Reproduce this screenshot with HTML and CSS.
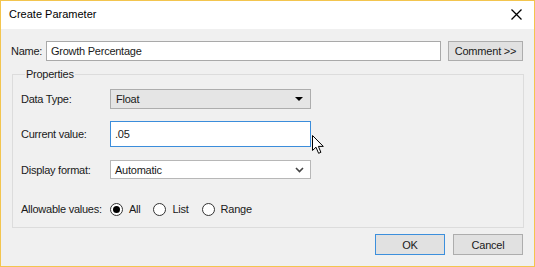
FILE: index.html
```html
<!DOCTYPE html>
<html lang="en">
<head>
    <meta charset="UTF-8">
    <title>Create Parameter</title>
    <link rel="stylesheet" href="styles.css">
</head>
<body>
  <div class="dialog">
    <div class="titlebar">
      <span class="title">Create Parameter</span>
      <svg class="close" width="11" height="11" viewBox="0 0 11 11">
        <path d="M0.5 0.5 L10.5 10.5 M10.5 0.5 L0.5 10.5" stroke="#000" stroke-width="1.3"/>
      </svg>
    </div>

    <div class="content">
      <div class="name-row">
        <label class="name-label">Name:</label>
        <div class="textbox name-box">Growth Percentage</div>
        <button class="btn comment-btn">Comment &gt;&gt;</button>
      </div>

      <fieldset class="props">
        <legend>Properties</legend>

        <div class="row row-type">
          <span class="lbl">Data Type:</span>
          <div class="combo">
            <span>Float</span>
            <span class="tri"></span>
          </div>
        </div>

        <div class="row row-value">
          <span class="lbl">Current value:</span>
          <div class="textbox value-box">.05</div>
        </div>

        <div class="row row-format">
          <span class="lbl">Display format:</span>
          <div class="dropdown">
            <span>Automatic</span>
            <svg width="9" height="6" viewBox="0 0 9 6">
              <path d="M1 1 L4.5 4.5 L8 1" fill="none" stroke="#444" stroke-width="1.6"/>
            </svg>
          </div>
        </div>

        <div class="row row-allow">
          <span class="lbl">Allowable values:</span>
          <div class="radios">
            <span class="radio checked"></span><span class="rtext">All</span>
            <span class="radio"></span><span class="rtext">List</span>
            <span class="radio"></span><span class="rtext">Range</span>
          </div>
        </div>
      </fieldset>

      <div class="actions">
        <button class="btn ok-btn">OK</button>
        <button class="btn">Cancel</button>
      </div>
    </div>

    <!-- mouse pointer sitting next to the value box -->
    <svg class="pointer" width="13" height="20" viewBox="0 0 13 20">
      <path d="M0.5 0.5 L0.5 15.5 L4 12.2 L6.6 18.3 L8.9 17.3 L6.4 11.4 L11.3 11.4 Z" fill="#fff" stroke="#000" stroke-width="1"/>
    </svg>
  </div>
</body>
</html>
```

FILE: styles.css
```css
* {
  box-sizing: border-box;
}

body {
  margin: 0;
  font-family: "Liberation Sans", Arial, sans-serif;
  font-size: 11px;
  letter-spacing: -0.25px;
  color: #1a1a1a;
}

.dialog {
  position: relative;
  width: 535px;
  height: 267px;
  border: 1px solid #f3c54e;
  background: #f0f0f0;
  display: flex;
  flex-direction: column;
}

.titlebar {
  height: 28px;
  background: #fff;
  display: flex;
  align-items: center;
  justify-content: space-between;
  padding: 0 12px 2px 8px;
}

.title {
  font-size: 11px;
  letter-spacing: 0;
  color: #000;
}

.close {
  margin-top: 1px;
}

.content {
  flex: 1;
  padding: 12px 11px 0 10px;
}

.name-row {
  display: flex;
  align-items: center;
  height: 20px;
}

.name-label {
  width: 35px;
}

.textbox {
  background: #fff;
  border: 1px solid #a9a9a9;
  padding: 0 4px;
  display: flex;
  align-items: center;
}

.name-box {
  width: 395px;
  height: 20px;
}

.btn {
  font-family: inherit;
  font-size: 11px;
  letter-spacing: -0.2px;
  color: #1a1a1a;
  background: #e1e1e1;
  border: 1px solid #adadad;
  height: 21px;
  width: 70px;
  padding: 0;
}

.comment-btn {
  width: 75px;
  height: 20px;
  margin-left: 7px;
}

.props {
  margin: 6px 0 0 1px;
  width: 512px;
  border: 1px solid #dcdcdc;
  padding: 8px 0 10px 8px;
  height: 161px;
}

.props legend {
  padding: 0 1px;
  margin-left: 4px;
  line-height: 14px;
}

.row {
  display: flex;
  align-items: center;
}

.lbl {
  width: 89px;
}

.row-type {
  height: 20px;
}

.row-value {
  height: 26px;
  margin-top: 12px;
}

.row-format {
  height: 19px;
  margin-top: 13px;
}

.row-allow {
  height: 14px;
  margin-top: 23px;
}

.combo {
  width: 201px;
  height: 20px;
  background: #e5e5e5;
  border: 1px solid #adadad;
  display: flex;
  align-items: center;
  justify-content: space-between;
  padding: 0 7px 0 5px;
}

.tri {
  width: 0;
  height: 0;
  border-left: 4px solid transparent;
  border-right: 4px solid transparent;
  border-top: 4px solid #000;
}

.value-box {
  width: 201px;
  height: 26px;
  border-color: #3b8ddb;
  padding-left: 4px;
}

.dropdown {
  width: 201px;
  height: 19px;
  background: #fff;
  border: 1px solid #b7b7b7;
  display: flex;
  align-items: center;
  justify-content: space-between;
  padding: 0 6px 0 4px;
}

.radios {
  display: flex;
  align-items: center;
}

.radio {
  width: 13px;
  height: 13px;
  border: 1px solid #333;
  border-radius: 50%;
  background: #fff;
  display: flex;
  align-items: center;
  justify-content: center;
}

.radio.checked::after {
  content: "";
  width: 7px;
  height: 7px;
  border-radius: 50%;
  background: #000;
}

.rtext {
  margin: 0 13px 0 6px;
}

.actions {
  display: flex;
  justify-content: flex-end;
  gap: 8px;
  margin-top: 6px;
}

.ok-btn {
  border-color: #3c8fdc;
}

.pointer {
  position: absolute;
  left: 311px;
  top: 134px;
}
```
